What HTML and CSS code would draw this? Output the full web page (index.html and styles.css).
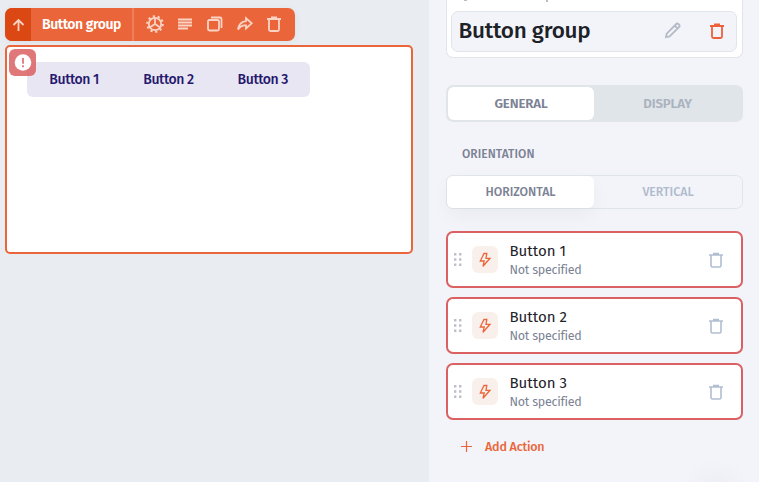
FILE: index.html
```html
<!DOCTYPE html>
<html lang="en">
<head>
<meta charset="utf-8">
<title>Button group</title>
<link rel="stylesheet" href="styles.css">
</head>
<body>
<svg class="defs" width="0" height="0">
  <symbol id="trash" viewBox="0 0 16 18"><path d="M1 4h14M5 2.500h6M3 4v10.500q0 1.500 1.500 1.500h7q1.500 0 1.500-1.500V4"/></symbol>
  <symbol id="bolt" viewBox="0 0 14 16"><path d="M6 1.500h2.800L8 6.300h4L5 14.300 6.200 9H2.300z"/></symbol>
  <symbol id="grip" viewBox="0 0 8 14"><path d="M0 0h2.400v2.400H0zM5 0h2.400v2.400H5zM0 5.300h2.400v2.400H0zM5 5.300h2.400v2.400H5zM0 10.600h2.400V13H0zM5 10.600h2.400V13H5z"/></symbol>
</svg>
<main class="canvas">
  <div class="toolbar">
    <div class="up"><svg class="icon" width="14" height="14" viewBox="0 0 14 14"><path d="M7.500 13V2M2.500 7l5-5 5 5"/></svg></div>
    <div class="tool-title"><span>Button group</span></div>
    <div class="tools">
      <svg class="icon" width="18" height="18" viewBox="0 0 18 18"><circle cx="9" cy="9" r="6.200"/><circle class="teeth" cx="9" cy="9" r="7.800"/><path d="M9 9V3M9 9l-5 3.200M9 9l5 3.200"/></svg>
      <svg class="icon" width="18" height="18" viewBox="0 0 18 18"><path d="M2 4.500h14M2 7.500h14M2 10.500h14M2 13.500h10"/></svg>
      <svg class="icon" width="18" height="18" viewBox="0 0 18 18"><rect x="2" y="5" width="11" height="10.500" rx="1.500"/><path d="M5 2.500h9q1.500 0 1.500 1.500v9"/></svg>
      <svg class="icon" width="18" height="18" viewBox="0 0 18 18"><path d="M10 3.200l5.700 5.100-5.700 5.100v-3Q5 9.800 2 14.600 3.300 6.700 10 6.200z"/></svg>
      <svg class="icon" width="16" height="18"><use href="#trash"/></svg>
    </div>
  </div>
  <section class="frame">
    <div class="alert"><svg width="18" height="18" viewBox="0 0 18 18"><circle cx="9" cy="8.500" r="8.300"/><path d="M9 4v5.800M9 11.300v1.900"/></svg></div>
    <div class="group"><span>Button 1</span><span>Button 2</span><span>Button 3</span></div>
  </section>
</main>
<aside class="panel">
  <header class="heading">
    <i class="mark-a"></i><i class="mark-b"></i>
    <div class="name">
      <h1>Button group</h1>
      <svg class="icon pencil" width="18" height="18" viewBox="0 0 18 18"><path d="M2 15.200l.7-3.600L12.300 2q1-1 2 0l.9.900q1 1 0 2L5.600 14.500zM10.700 3.600l2.900 2.900"/></svg>
      <svg class="icon red" width="16" height="18"><use href="#trash"/></svg>
    </div>
  </header>
  <nav class="tabs"><span class="on">GENERAL</span><span>DISPLAY</span></nav>
  <h2>ORIENTATION</h2>
  <div class="switch"><span class="on">HORIZONTAL</span><span>VERTICAL</span></div>
  <div class="actions">
    <article><svg class="grip" width="8" height="14"><use href="#grip"/></svg><div class="tile"><svg class="icon" width="14" height="16"><use href="#bolt"/></svg></div><div class="text"><b>Button 1</b><small>Not specified</small></div><svg class="icon" width="16" height="18"><use href="#trash"/></svg></article>
    <article><svg class="grip" width="8" height="14"><use href="#grip"/></svg><div class="tile"><svg class="icon" width="14" height="16"><use href="#bolt"/></svg></div><div class="text"><b>Button 2</b><small>Not specified</small></div><svg class="icon" width="16" height="18"><use href="#trash"/></svg></article>
    <article><svg class="grip" width="8" height="14"><use href="#grip"/></svg><div class="tile"><svg class="icon" width="14" height="16"><use href="#bolt"/></svg></div><div class="text"><b>Button 3</b><small>Not specified</small></div><svg class="icon" width="16" height="18"><use href="#trash"/></svg></article>
  </div>
  <div class="add"><svg class="icon" width="12" height="12" viewBox="0 0 12 12"><path d="M6.500 1v11M1 6.500h11"/></svg><span>Add Action</span></div>
  <i class="glow"></i>
</aside>
</body>
</html>
```

FILE: styles.css
```css
* { box-sizing: border-box; }
body { margin: 0; width: 759px; height: 482px; overflow: hidden; display: flex; background: #f3f4f9; font-family: "Fira Sans", "Noto Sans", sans-serif; font-stretch: 87.5%; }
span, h1, h2, b, small { white-space: nowrap; }
.defs { position: absolute; }
.icon { fill: none; stroke: currentColor; stroke-width: 1.8; flex: none; display: block; }
.canvas { width: 429px; height: 482px; padding: 8px 0 0 5px; background: #e9edf1; }
.toolbar { width: 290px; height: 33px; display: flex; border-radius: 7px; overflow: hidden; background: #ea663a; color: #fbd3c5; box-shadow: 0 2px 10px #0000000d; }
.up { width: 26px; display: grid; place-items: center; background: #dc4814; }
.tool-title { width: 103px; padding-left: 11px; display: flex; align-items: center; border-right: 2px solid #ee8059; color: #fff; font-size: 14px; font-weight: 600; letter-spacing: -.42px; }
.tools { flex: 1; display: flex; align-items: center; justify-content: space-between; padding: 0 13px 2px 12px; }
.teeth { stroke-width: 2; stroke-dasharray: 2.2 2.7; }
.frame { position: relative; width: 408px; height: 209px; margin-top: 4px; padding: 15px 0 0 20px; border: 2px solid #ea663a; border-radius: 5px; background: #fff; }
.alert { position: absolute; z-index: 1; left: 2px; top: 2px; width: 27px; height: 27px; display: grid; place-items: center; border-radius: 6px; background: #db5f60d9; }
.alert circle { fill: #fff; }
.alert path { stroke: #df7778; stroke-width: 1.8; }
.group { width: 283px; height: 35px; display: grid; grid-template-columns: repeat(3, 1fr); place-items: center; border-radius: 6px; background: #e8e6f3; color: #26186d; font-size: 14px; font-weight: 500; letter-spacing: -.42px; }
.panel { position: relative; width: 330px; height: 482px; padding: 0 16px 0 17px; }
.heading { position: relative; height: 58px; padding: 11px 5px 0 4px; border: 1px solid #e0e5ea; border-top: 0; border-radius: 0 0 7px 7px; background: #fff; }
.mark-a, .mark-b { position: absolute; top: 0; left: 17px; width: 3px; height: 1px; background: #b9bec6; }
.mark-b { left: 99px; width: 2px; height: 2px; }
.name { height: 41px; display: flex; align-items: center; padding: 0 11px 2px 7px; border: 1px solid #e0e5ea; border-radius: 7px; background: #f3f4f9; color: #b4bbc7; }
h1 { flex: 1; margin: 0 0 0 -.5px; color: #1d2128; font-size: 22.5px; font-weight: 500; letter-spacing: -.25px; }
.pencil { margin-right: 27px; }
.red { color: #ec613b; }
.tabs { height: 37px; margin-top: 27px; padding: 2px; display: grid; grid-template-columns: 146px 1fr; border-radius: 7px; background: #e0e5e9; color: #aab2c0; font-size: 13.3px; font-weight: 600; letter-spacing: -.15px; }
.tabs span, .switch span { display: grid; place-items: center; border-radius: 6px; }
.on { background: #fff; color: #7b8294; }
h2 { height: 18px; margin: 23px 0 0 16px; color: #7b8294; font-size: 12px; line-height: 18px; font-weight: 500; letter-spacing: .05px; }
.switch { height: 34px; margin-top: 12px; display: grid; grid-template-columns: 147px 1fr; border: 1px solid #e0e5ea; border-radius: 7px; color: #b0bccd; font-size: 12.3px; font-weight: 500; }
.switch span { padding-bottom: 2px; }
.switch .on { box-shadow: 0 8px 20px #0000000a; }
.actions { display: grid; gap: 9px; margin-top: 22px; }
article { height: 57px; padding: 0 17.5px 0 6px; display: flex; align-items: center; border: 2px solid #db6062; border-radius: 7px; background: #fff; color: #b1bed1; }
article > .icon { stroke-width: 1.6; }
.grip { fill: #bdbfca; }
.tile { width: 26px; height: 27px; margin-left: 10px; display: grid; place-items: center; border-radius: 6px; background: #faf0eb; color: #ea663a; }
.tile .icon { stroke-width: 1.3; }
.text { flex: 1; margin-left: 11.5px; padding-top: 2px; }
b, small { display: block; }
b { color: #1d2128; font-size: 15px; line-height: 19px; font-weight: 400; }
small { color: #7b8294; font-size: 12.5px; line-height: 18px; letter-spacing: -.25px; }
.add { height: 22px; margin: 15px 0 0 14px; display: flex; align-items: center; gap: 13px; color: #ea663a; font-size: 12.5px; font-weight: 500; letter-spacing: -.2px; }
.add .icon { stroke-width: 1.2; }
.glow { position: absolute; left: 286px; top: 494px; width: 1px; height: 1px; box-shadow: 0 0 22px 14px #cdd6dd50; }
```
